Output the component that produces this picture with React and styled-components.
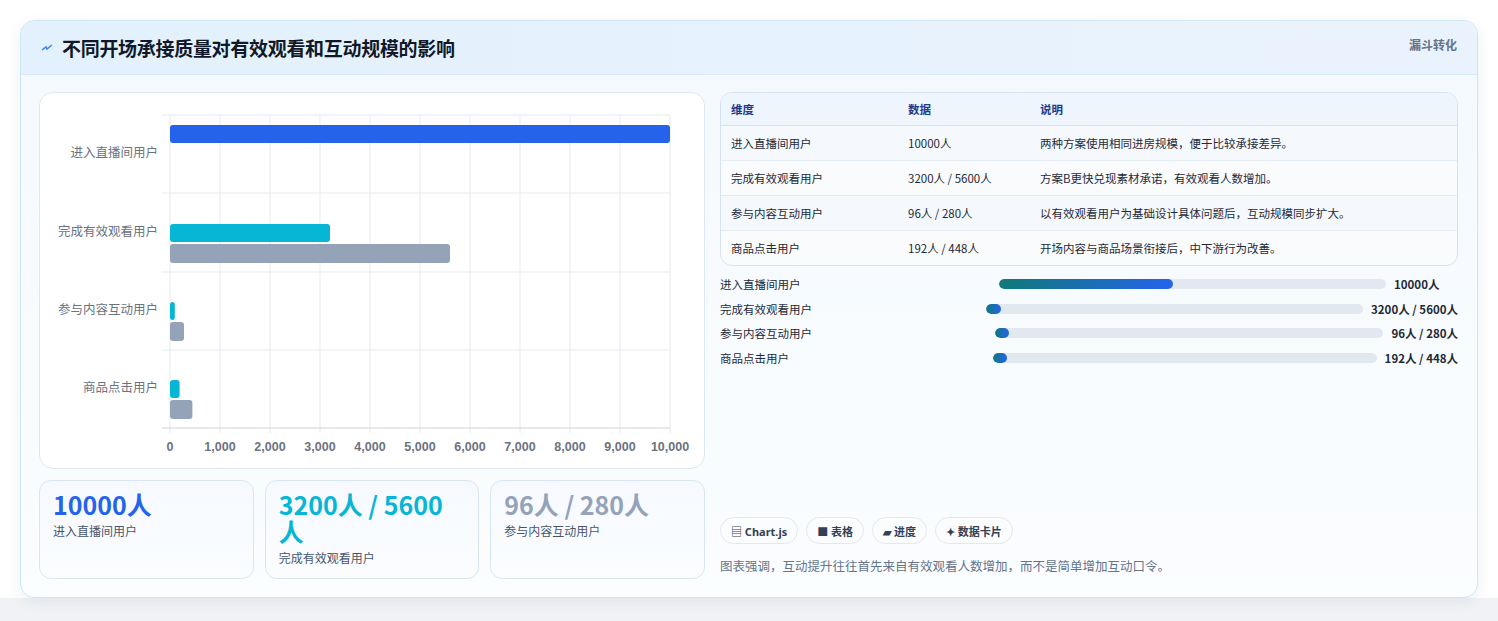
import React from "react";
import styled, { createGlobalStyle } from "styled-components";

const Global = createGlobalStyle`
  body { margin: 0; background: #f3f5f8; font-family: "Noto Sans", "Noto Sans CJK SC", sans-serif; }
`;
const Page = styled.div`
  padding: 20px 20px 22px 20px; background: #fff; height: 621px; box-sizing: border-box;
  background: linear-gradient(#fff 0 598px, #f1f2f5 598px);
`;
const Card = styled.div`
  border: 1px solid #cfe6f2; border-radius: 14px; overflow: hidden;
  background: linear-gradient(180deg, #f3f9fe, #fbfdff);
  box-shadow: 0 4px 14px rgba(30,60,120,0.08);
  height: 578px; box-sizing: border-box; display: flex; flex-direction: column;
`;
const Header = styled.div`
  height: 54px; flex: none; box-sizing: border-box; display: flex; align-items: center; justify-content: space-between;
  padding: 0 20px 0 20px; background: linear-gradient(90deg, #e2f1fd, #eaf3fd);
  border-bottom: 1px solid #d6e9f7;
`;
const Title = styled.h1`
  margin: 0; font-size: 19px; font-weight: 700; color: #111827; display: flex; align-items: center; gap: 9px;
  font-family: "Noto Sans CJK SC", sans-serif; letter-spacing: -0.3px;
`;
const Tag = styled.span`
  font-size: 12px; font-weight: 700; color: #64748b; align-self: flex-start; margin-top: 15px;
`;
const Body = styled.div`
  flex: 1; display: grid; grid-template-columns: 666px 738px; gap: 15px; padding: 17px 18px 18px 18px;
`;
const Left = styled.div` display: flex; flex-direction: column; gap: 11px; `;
const ChartBox = styled.div`
  background: #fff; border: 1px solid #dde8f3; border-radius: 14px; height: 377px; box-sizing: border-box; overflow: hidden;
`;
const Stats = styled.div` display: grid; grid-template-columns: repeat(3, 1fr); gap: 11px; `;
const Stat = styled.div`
  height: 99px; box-sizing: border-box; border: 1px solid #d6e6f5; border-radius: 12px;
  background: linear-gradient(180deg, #f6f9ff, #fbfdff); padding: 10px 13px;
`;
const StatVal = styled.div`
  font-size: 25px; font-weight: 700; line-height: 27px; color: ${p => p.c}; font-family: "Noto Sans CJK SC", sans-serif;
`;
const StatLbl = styled.div` font-size: 12px; color: #475569; margin-top: 4px; font-family: "Noto Sans CJK SC", sans-serif; `;
const Right = styled.div` display: flex; flex-direction: column; `;
const Table = styled.table`
  width: 100%; border-collapse: separate; border-spacing: 0; border: 1px solid #d6e3ef; border-radius: 12px; overflow: hidden;
  font-size: 11.5px; font-family: "Noto Sans CJK SC", sans-serif; background: #f9fbfd;
  th { text-align: left; color: #1e3a8a; font-weight: 600; height: 32px; padding: 0 10px; background: #eef5fd; border-bottom: 1px solid #d6e3ef; }
  td { height: 34px; padding: 0 10px; color: #1f2937; border-bottom: 1px solid #e3ebf3; }
  tr:last-child td { border-bottom: none; }
  tbody tr:nth-child(odd) td { background: #f5f9fd; }
`;
const Bars = styled.div` display: flex; flex-direction: column; gap: 6px; margin-top: 9px; `;
const BarRow = styled.div`
  display: flex; align-items: center; height: 18.5px; font-size: 11.5px; font-family: "Noto Sans CJK SC", sans-serif; color: #1f2937;
`;
const BarLbl = styled.span` width: ${p => p.w}px; flex: none; `;
const Track = styled.div` flex: 1; height: 10px; border-radius: 5px; background: #e2e8f0; overflow: hidden; `;
const Fill = styled.div` height: 100%; border-radius: 5px; background: linear-gradient(90deg, #0f7a7a, #2563eb); `;
const BarVal = styled.span` margin-left: ${p => p.m}px; font-weight: 700; flex: none; min-width: ${p => p.mw}px; `;
const Spacer = styled.div` flex: 1; `;
const Chips = styled.div` display: flex; gap: 8px; `;
const Chip = styled.span`
  height: 27px; box-sizing: border-box; padding: 0 10px; border: 1px solid #e3e8ee; border-radius: 14px; background: #fbfcfd;
  display: inline-flex; align-items: center; gap: 4px; font-size: 11px; font-weight: 700; color: #334155; font-family: "Noto Sans", "Noto Sans CJK SC", sans-serif;
`;
const Note = styled.p` margin: 12px 0 4px; font-size: 12.5px; color: #64748b; font-family: "Noto Sans CJK SC", sans-serif; `;

const cats = ["进入直播间用户", "完成有效观看用户", "参与内容互动用户", "商品点击用户"];
const a = [10000, 3200, 96, 192], b = [null, 5600, 280, 448];
const X = v => 130 + v * 0.05;

function Chart() {
  return (
    <svg width="666" height="377" viewBox="0 0 666 377" fontFamily="Noto Sans CJK SC, sans-serif">
      {Array.from({ length: 11 }, (_, i) => (
        <line key={i} x1={130 + 50 * i} x2={130 + 50 * i} y1={22} y2={340} stroke="#e5eaf0" />
      ))}
      {[22, 100, 179, 257].map(y => <line key={y} x1={122} x2={630} y1={y} y2={y} stroke="#e5eaf0" />)}
      <line x1={122} x2={630} y1={335} y2={335} stroke="#cbd2db" />
      {cats.map((c, i) => (
        <text key={c} x={118} y={[64, 143, 221, 299][i]} textAnchor="end" fontSize="12.5" fill="#6b7280">{c}</text>
      ))}
      <rect x={130} y={32} width={X(10000) - 130} height={18} rx={3} fill="#2563eb" />
      {[1, 2, 3].map(i => {
        const y0 = 131 + (i - 1) * 78;
        return (
          <g key={i}>
            <rect x={130} y={y0} width={Math.max(X(a[i]) - 130, 4)} height={18} rx={3} fill="#06b6d4" />
            <rect x={130} y={y0 + 20} width={X(b[i]) - 130} height={19} rx={3} fill="#94a3b8" />
          </g>
        );
      })}
      {Array.from({ length: 11 }, (_, i) => (
        <text key={i} x={130 + 50 * i} y={358} textAnchor="middle" fontSize="12.5" fontWeight="700" fill="#6b7280" fontFamily="Liberation Sans Narrow, Liberation Sans, sans-serif">
          {i === 0 ? "0" : (i * 1000).toLocaleString("en-US")}
        </text>
      ))}
    </svg>
  );
}

const rows = [
  ["进入直播间用户", "10000人", "两种方案使用相同进房规模，便于比较承接差异。"],
  ["完成有效观看用户", "3200人 / 5600人", "方案B更快兑现素材承诺，有效观看人数增加。"],
  ["参与内容互动用户", "96人 / 280人", "以有效观看用户为基础设计具体问题后，互动规模同步扩大。"],
  ["商品点击用户", "192人 / 448人", "开场内容与商品场景衔接后，中下游行为改善。"],
];
const bars = [
  { l: "进入直播间用户", w: 279, v: "10000人", f: 45, m: 8, mw: 64 },
  { l: "完成有效观看用户", w: 266, v: "3200人 / 5600人", f: 4, m: 8, mw: 0 },
  { l: "参与内容互动用户", w: 275, v: "96人 / 280人", f: 2, m: 8, mw: 0 },
  { l: "商品点击用户", w: 273, v: "192人 / 448人", f: 2.5, m: 8, mw: 0 },
];

export default function App() {
  return (
    <Page>
      <Global />
      <Card>
        <Header>
          <Title>
            <svg width="12" height="10" viewBox="0 0 12 10"><path d="M1 7 L5 4 L6 6 L11 2" stroke="#3b82f6" strokeWidth="1.5" fill="none" /></svg>
            不同开场承接质量对有效观看和互动规模的影响
          </Title>
          <Tag>漏斗转化</Tag>
        </Header>
        <Body>
          <Left>
            <ChartBox><Chart /></ChartBox>
            <Stats>
              <Stat><StatVal c="#2563eb">10000人</StatVal><StatLbl>进入直播间用户</StatLbl></Stat>
              <Stat><StatVal c="#06b6d4">3200人 / 5600人</StatVal><StatLbl>完成有效观看用户</StatLbl></Stat>
              <Stat><StatVal c="#94a3b8">96人 / 280人</StatVal><StatLbl>参与内容互动用户</StatLbl></Stat>
            </Stats>
          </Left>
          <Right>
            <Table>
              <colgroup><col style={{ width: 177 }} /><col style={{ width: 132 }} /><col /></colgroup>
              <thead><tr><th>维度</th><th>数据</th><th>说明</th></tr></thead>
              <tbody>{rows.map(r => <tr key={r[0]}>{r.map((c, i) => <td key={i}>{c}</td>)}</tr>)}</tbody>
            </Table>
            <Bars>
              {bars.map(b => (
                <BarRow key={b.l}>
                  <BarLbl w={b.w}>{b.l}</BarLbl>
                  <Track><Fill style={{ width: `${b.f}%`, minWidth: 14 }} /></Track>
                  <BarVal m={b.m} mw={b.mw}>{b.v}</BarVal>
                </BarRow>
              ))}
            </Bars>
            <Spacer />
            <Chips>
              <Chip>▤ Chart.js</Chip>
              <Chip>■ 表格</Chip>
              <Chip>▰ 进度</Chip>
              <Chip>✦ 数据卡片</Chip>
            </Chips>
            <Note>图表强调，互动提升往往首先来自有效观看人数增加，而不是简单增加互动口令。</Note>
          </Right>
        </Body>
      </Card>
    </Page>
  );
}
